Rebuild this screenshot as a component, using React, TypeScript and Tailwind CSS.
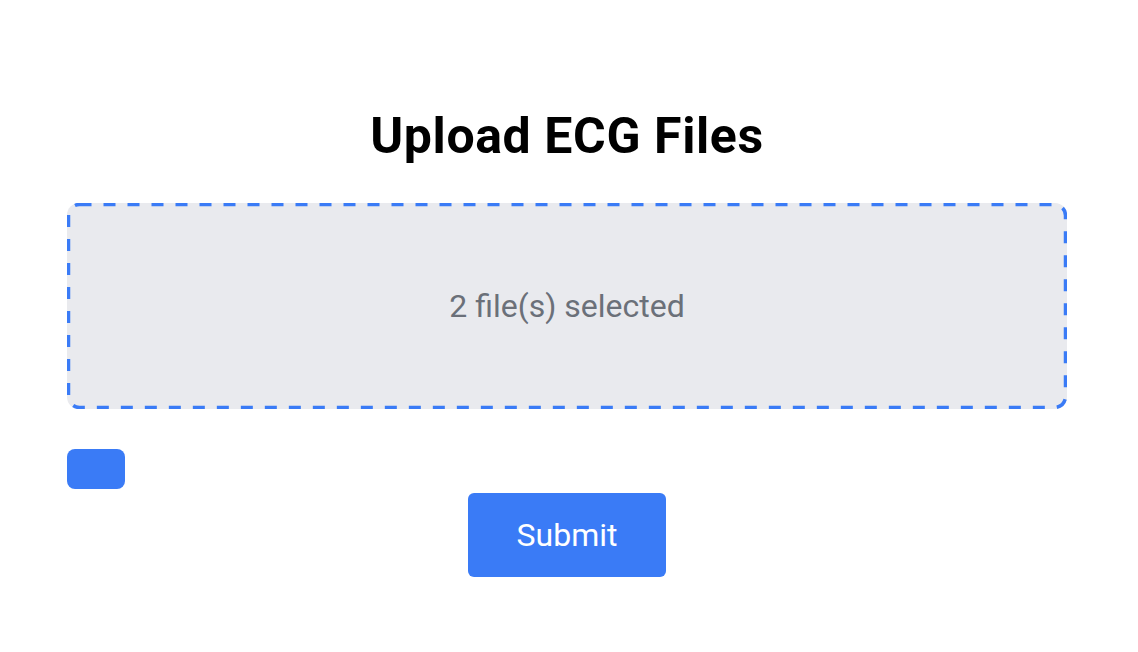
import React from 'react';

export default function App() {
  const count = 2;

  return (
    <div className="min-h-screen bg-white" style={{ fontFamily: 'Roboto, "Liberation Sans", sans-serif' }}>
      <div className="ml-[67px] w-[1000px] pt-[104px]">
        <h1 className="text-center text-[50px] font-bold leading-[64px] tracking-[0.6px] text-black">Upload ECG Files</h1>

        {/* drop zone, dashed outline drawn in svg so dash length matches */}
        <div className="relative mt-[35px] flex h-[206px] items-center justify-center rounded-[12px] bg-[#e9eaee]">
          <svg className="absolute inset-0 h-full w-full" width="1000" height="206">
            <rect x="1.5" y="1.5" width="997" height="203" rx="11" ry="11" fill="none" stroke="#3a7bf6" strokeWidth="3.5" strokeDasharray="12 12" />
          </svg>
          <p className="text-[32px] text-[#6b7079]">{count} file(s) selected</p>
        </div>

        <div className="mt-[40px] h-[40px] w-[58px] rounded-[8px] bg-[#3a7bf6]" />

        <div className="mt-[4px] flex justify-center">
          <button className="h-[84px] w-[198px] rounded-[6px] bg-[#3a7bf6] text-[32px] text-white">Submit</button>
        </div>
      </div>
    </div>
  );
}
